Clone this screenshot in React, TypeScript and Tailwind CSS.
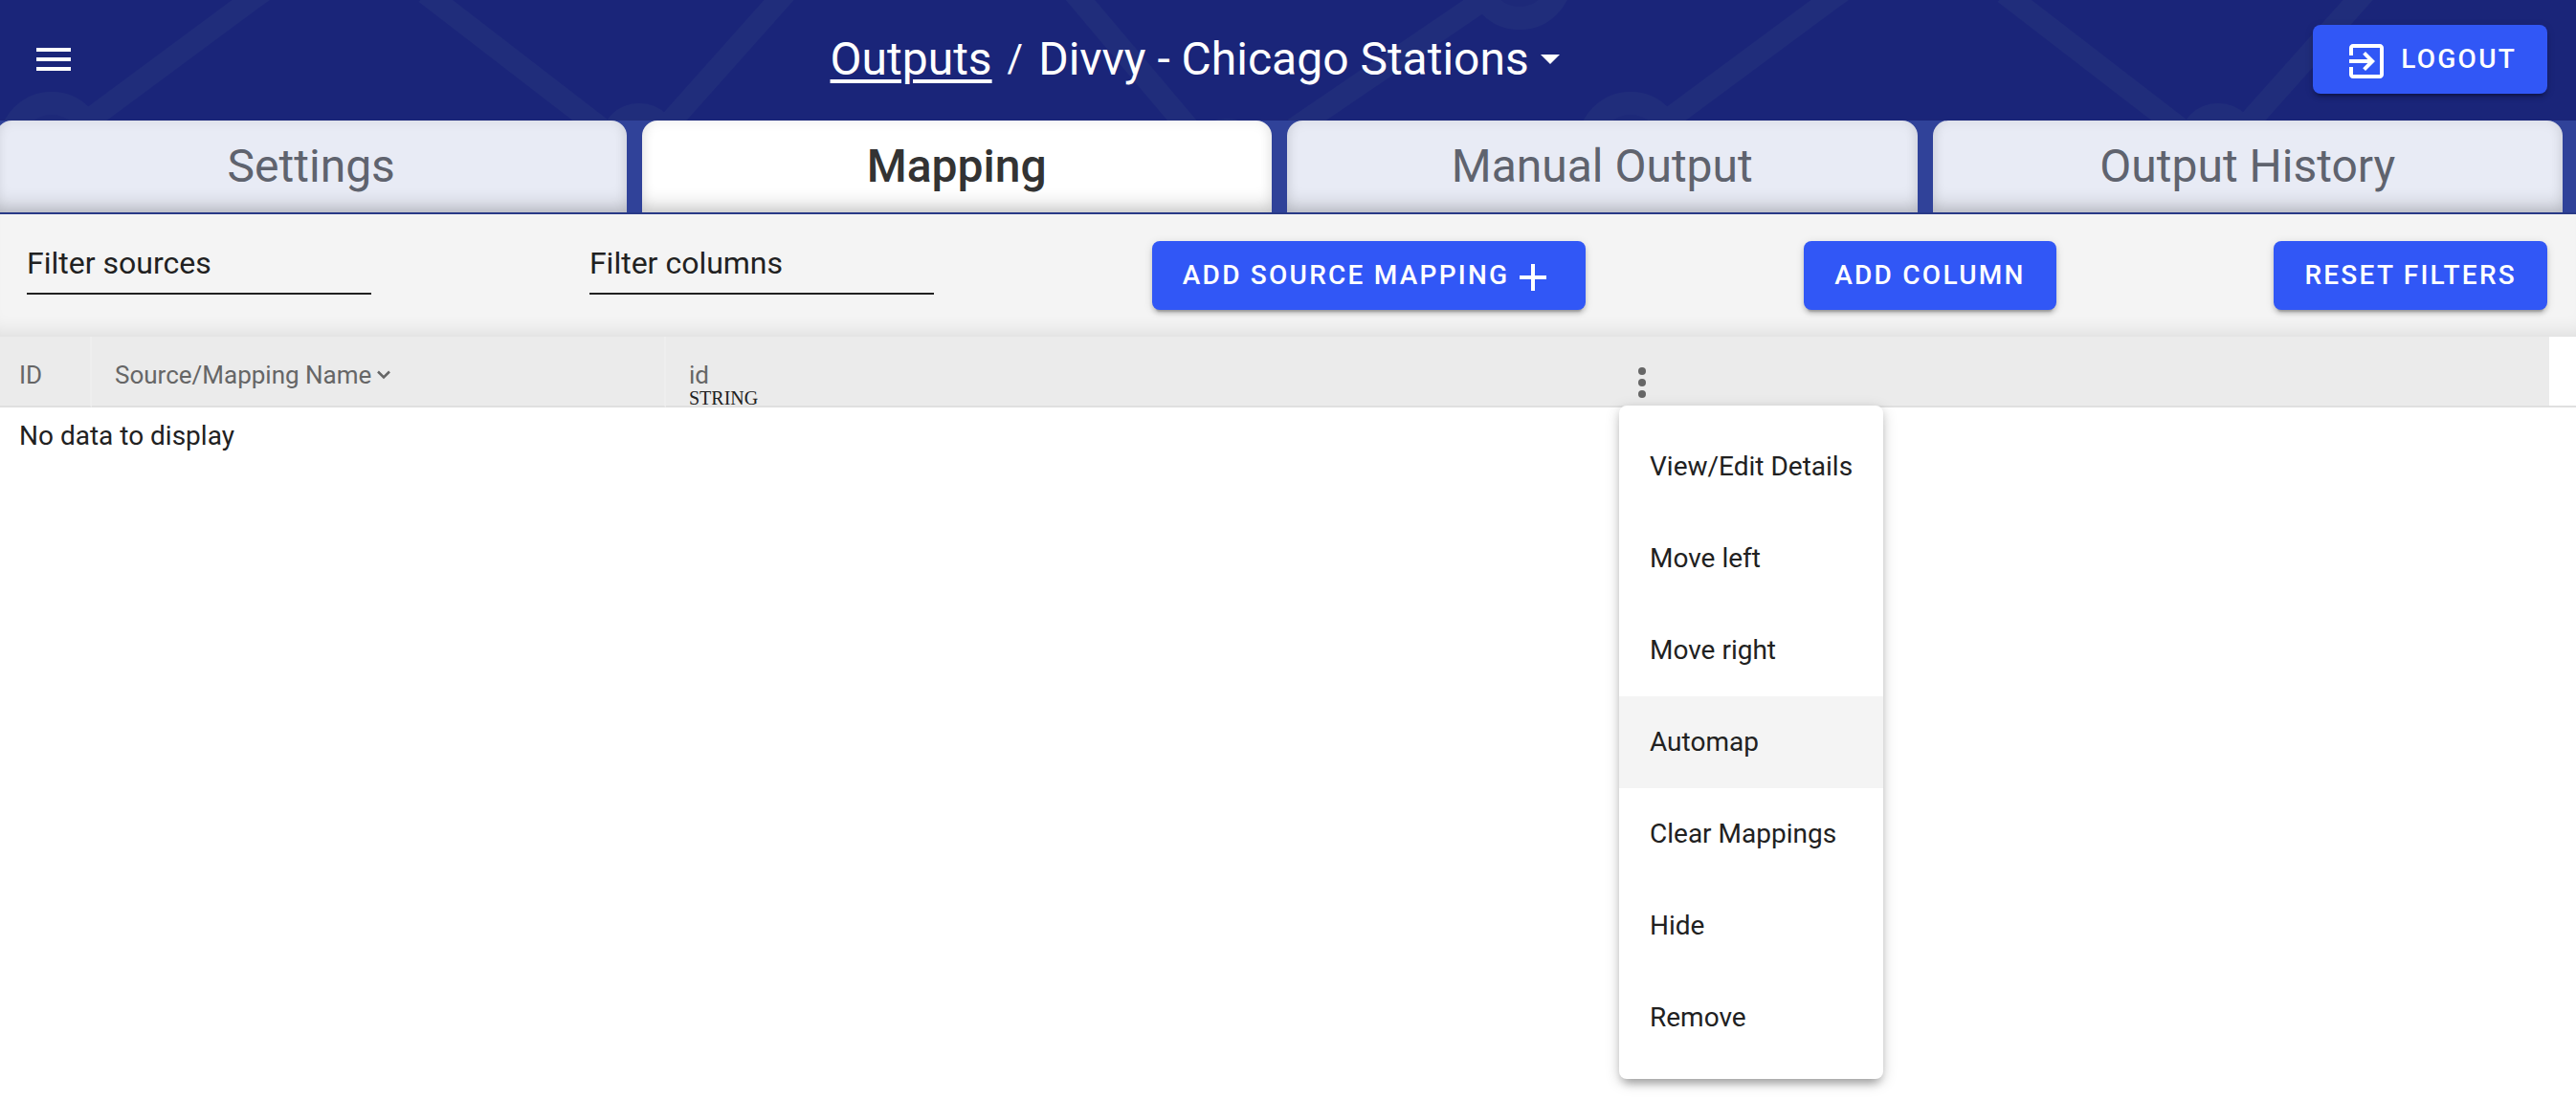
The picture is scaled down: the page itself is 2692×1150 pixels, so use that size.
import React from "react";

const button =
  "flex h-[72px] items-center rounded-lg bg-[#3157f6] px-8 text-[28px] font-medium uppercase leading-none tracking-[0.08em] text-white shadow-[0_6px_2px_-4px_rgba(0,0,0,0.2),0_4px_4px_rgba(0,0,0,0.14),0_2px_10px_rgba(0,0,0,0.12)]";

const headCell = "border-b-2 border-b-[#e0e0e0] bg-[#ebebeb] pt-[22px] font-normal";

const tabs = ["Settings", "Mapping", "Manual Output", "Output History"];

const menuItems = [
  "View/Edit Details",
  "Move left",
  "Move right",
  "Automap",
  "Clear Mappings",
  "Hide",
  "Remove",
];

function HeaderPattern() {
  return (
    <svg className="absolute inset-0 h-full w-full" aria-hidden="true">
      <defs>
        <pattern id="network" width="1650" height="400" patternUnits="userSpaceOnUse">
          <g fill="none" stroke="#202d7b" strokeWidth="23">
            <path d="M262 0L92 126M262 0L276 -10M454 0L620 128M814 0L700 128M1129 0L1237 128M1550 0L1362 128" strokeLinecap="square" />
            <circle cx="54" cy="151" r="43" strokeWidth="24" />
            <circle cx="668" cy="149" r="29" strokeWidth="24" />
            <circle cx="1282" cy="165" r="29" strokeWidth="24" />
            <circle cx="1588" cy="-24" r="43" strokeWidth="24" />
          </g>
          <g fill="#1d2979">
            <circle cx="54" cy="151" r="31" />
            <circle cx="1588" cy="-24" r="31" />
          </g>
        </pattern>
      </defs>
      <rect width="100%" height="100%" fill="url(#network)" />
    </svg>
  );
}

function Header() {
  return (
    <header className="relative flex h-[126px] items-center justify-between bg-[#1a2579] pb-0.5 pl-8 pr-[30px] text-white">
      <HeaderPattern />
      <button aria-label="Open menu" className="relative h-12 w-12">
        <svg viewBox="0 0 24 24" fill="currentColor" className="h-12 w-12">
          <path d="M3 18h18v-2H3v2zm0-5h18v-2H3v2zm0-7v2h18V6H3z" />
        </svg>
      </button>
      <h1 className="relative flex items-center text-[48px] leading-[64px]">
        <a href="#outputs" className="underline decoration-4 underline-offset-[5px]">Outputs</a>
        <span className="mx-4 text-[40px]">/</span>
        <button className="flex items-center gap-3">
          Divvy - Chicago Stations
          <svg viewBox="0 0 20 10" fill="currentColor" className="h-[10px] w-5">
            <path d="M0 0h20L10 10z" />
          </svg>
        </button>
      </h1>
      <button className={`${button} relative gap-3`}>
        <svg viewBox="0 0 24 24" fill="currentColor" className="mt-1 h-12 w-12">
          <path d="M10.09 15.59L11.5 17l5-5-5-5-1.41 1.41L12.67 11H3v2h9.67l-2.58 2.59zM19 3H5c-1.11 0-2 .9-2 2v4h2V5h14v14H5v-4H3v4c0 1.1.89 2 2 2h14c1.1 0 2-.9 2-2V5c0-1.1-.9-2-2-2z" />
        </svg>
        Logout
      </button>
    </header>
  );
}

function Tabs() {
  return (
    <nav className="flex border-b-2 border-[#293a87] bg-[#304299] pr-[14px]">
      <div className="-ml-1 grid grow grid-cols-4 gap-4">
        {tabs.map((tab) => (
          <a
            key={tab}
            href="#tab"
            aria-current={tab === "Mapping" ? "page" : undefined}
            className={`flex h-24 items-center justify-center rounded-t-2xl text-[48px] leading-none shadow-[inset_0_-14px_20px_-8px_rgba(0,0,0,0.2),inset_0_0_14px_rgba(0,0,0,0.08)] ${
              tab === "Mapping" ? "bg-white font-medium text-[#333333]" : "bg-[#e8ebf5] text-[#5f636e]"
            }`}
          >
            {tab}
          </a>
        ))}
      </div>
    </nav>
  );
}

function FilterField({ label }: { label: string }) {
  return (
    <input
      aria-label={label}
      placeholder={label}
      className="mb-5 h-[60px] w-[360px] border-b-2 border-[#212121] bg-transparent pb-1 text-[32px] placeholder:text-[#212121] placeholder:opacity-100"
    />
  );
}

function Toolbar() {
  return (
    <section className="flex h-32 items-center justify-between bg-[#f4f4f4] pl-7 pr-[30px] shadow-[inset_0_-20px_20px_-16px_rgba(0,0,0,0.1)]">
      <FilterField label="Filter sources" />
      <FilterField label="Filter columns" />
      <button className={button}>
        Add source mapping
        <svg viewBox="0 0 44 28" stroke="currentColor" strokeWidth="4" className="ml-1 mt-1 h-7 w-11">
          <path d="M7 14h28M21 0v28" />
        </svg>
      </button>
      <button className={button}>Add column</button>
      <button className={button}>Reset filters</button>
    </section>
  );
}

function ColumnMenu() {
  return (
    <div
      role="menu"
      className="absolute left-0 top-[72px] z-10 w-[276px] rounded-lg bg-white py-4 shadow-[0_10px_10px_-6px_rgba(0,0,0,0.2),0_4px_16px_rgba(0,0,0,0.16),0_4px_8px_rgba(0,0,0,0.12)]"
    >
      {menuItems.map((item) => (
        <button
          key={item}
          role="menuitem"
          className={`flex h-24 w-full items-center whitespace-nowrap px-8 text-[28px] text-[#212121] ${item === "Automap" ? "bg-[#f4f4f4]" : ""}`}
        >
          {item}
        </button>
      ))}
    </div>
  );
}

function MappingTable() {
  return (
    <table className="w-full table-fixed border-separate border-spacing-0 text-left text-[28px] text-[#212121]">
      <thead className="text-[26px] text-[#666666]">
        <tr className="h-[74px] align-top">
          <th className={`${headCell} w-24 border-r-2 border-r-[#eeeeee] pl-5 leading-9`}>ID</th>
          <th className={`${headCell} w-[600px] border-r-2 border-r-[#eeeeee] pl-6 leading-9`}>
            <button className="flex items-center gap-1.5">
              Source/Mapping Name
              <svg viewBox="0 0 14 10" fill="none" stroke="currentColor" strokeWidth="2.5" className="h-[10px] w-[14px]">
                <path d="M1 1.5l6 6 6-6" />
              </svg>
            </button>
          </th>
          <th className={`${headCell} w-[996px] pl-6`}>
            <div className="leading-9">id</div>
            <div className="-mt-1 h-[18px] font-['Liberation_Serif',serif] text-[20px] leading-5 text-[#212121]">STRING</div>
          </th>
          <th className="border-b-2 border-b-[#e0e0e0] bg-[#ebebeb] p-0 font-normal">
            <div className="relative h-[72px]">
              <button aria-label="Column actions" className="ml-1 mt-6 h-12 w-10">
                <svg viewBox="0 0 40 48" fill="currentColor" className="h-12 w-10">
                  <circle cx="20" cy="12" r="4" />
                  <circle cx="20" cy="24" r="4" />
                  <circle cx="20" cy="36" r="4" />
                </svg>
              </button>
              <ColumnMenu />
            </div>
          </th>
          <th className="w-7 border-b-2 border-b-[#e0e0e0] p-0" />
        </tr>
      </thead>
      <tbody>
        <tr>
          <td colSpan={5} className="pl-5 pt-2.5 leading-10">No data to display</td>
        </tr>
      </tbody>
    </table>
  );
}

export default function App() {
  return (
    <div className="min-h-screen bg-white font-[Roboto,sans-serif]">
      <Header />
      <Tabs />
      <Toolbar />
      <MappingTable />
    </div>
  );
}
